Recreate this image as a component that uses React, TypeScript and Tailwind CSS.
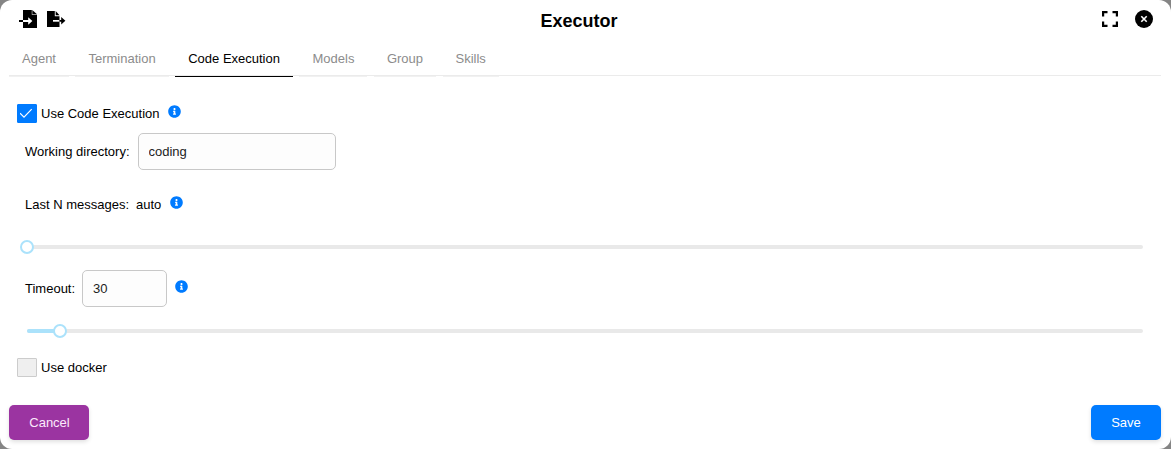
import { useState } from "react";
import { FaInfoCircle } from "react-icons/fa";

const TABS = ["Agent", "Termination", "Code Execution", "Models", "Group", "Skills"];

function ImportIcon() {
  return (
    <svg width="20" height="20" viewBox="0 0 20 20">
      <path d="M5 1h8.800v4.800H19v13.200H5z" fill="black" />
      <path d="M14.300 1 19 5.300H14.300z" fill="black" />
      <path d="M1 11h4v2H1z" fill="black" />
      <path d="M5 11h5.200V8.200l4.200 3.800-4.200 3.800V13H5z" fill="white" />
    </svg>
  );
}

function ExportIcon() {
  return (
    <svg width="20" height="20" viewBox="0 0 20 20">
      <path d="M0 2h7.800v5.200H12.500V18H0z" fill="black" />
      <path d="M8.700 2 12.500 6.300H8.700z" fill="black" />
      <path d="M6 11h6.500v1.700H6z" fill="white" />
      <path d="M12.500 11h1.700V8l4.200 3.800-4.200 3.800v-2.900h-1.700z" fill="black" />
    </svg>
  );
}

function FullscreenIcon() {
  return (
    <svg width="16" height="16" viewBox="0 0 16 16" fill="none" stroke="black" strokeWidth="2.200">
      <path d="M1.100 5.500V1.100H5.500M10.500 1.100h4.400V5.500M14.900 10.500v4.400H10.500M5.500 14.900H1.100V10.500" />
    </svg>
  );
}

function CloseIcon() {
  return (
    <svg width="18" height="18" viewBox="0 0 18 18">
      <circle cx="9" cy="9" r="9" fill="black" />
      <path d="m6.300 6.300 5.400 5.400M11.700 6.300l-5.400 5.400" stroke="white" strokeWidth="1.600" />
    </svg>
  );
}

function Info() {
  return <FaInfoCircle className="size-[13px] shrink-0 text-[#007bff]" />;
}

function Slider({ percent }: { percent: number }) {
  return (
    <div className="relative mx-[18px] h-1 rounded-full bg-[#e9e9e9]">
      <div className="h-1 rounded-full bg-[#abe2fb]" style={{ width: `${percent}%` }} />
      <div
        className="absolute -top-[5px] size-3.5 -translate-x-1/2 rounded-full border-2 border-[#abe2fb] bg-white"
        style={{ left: `${percent}%` }}
      />
    </div>
  );
}

function Checkbox({ checked, onChange }: { checked: boolean; onChange: () => void }) {
  return (
    <button
      role="checkbox"
      aria-checked={checked}
      onClick={onChange}
      className={`flex h-[19px] w-5 items-center justify-center rounded-[1px] border ${
        checked ? "border-[#007bff] bg-[#007bff]" : "border-[#cccccc] bg-[#efefef]"
      }`}
    >
      {checked && (
        <svg width="14" height="12" viewBox="0 0 14 12" className="shrink-0" fill="none" stroke="white" strokeWidth="1.200">
          <path d="m0 5.200 4 4 7.700-8" />
        </svg>
      )}
    </button>
  );
}

export default function App() {
  const [active, setActive] = useState("Code Execution");
  const [useCode, setUseCode] = useState(true);
  const [docker, setDocker] = useState(false);

  return (
    <div className="h-[449px] bg-[#858585] font-['Liberation_Sans',Arial,sans-serif] text-[13px] leading-5 text-black">
      <div className="flex h-full flex-col rounded-[12px] bg-white pl-[9px] pr-[10px]">
        <header className="flex h-[42px] shrink-0 items-start justify-between">
          <div className="flex w-[68px] gap-[9px] pl-[9px] pt-[9px]">
            <ImportIcon />
            <ExportIcon />
          </div>
          <h1 className="pt-[9px] text-[18px] font-bold leading-6">Executor</h1>
          <div className="flex w-20 items-center justify-end gap-[17px] pr-2 pt-[10px]">
            <FullscreenIcon />
            <CloseIcon />
          </div>
        </header>

        <nav className="flex h-[34px] shrink-0 gap-[6.500px] border-b border-[#ebebeb]">
          {TABS.map((tab) => (
            <button
              key={tab}
              onClick={() => setActive(tab)}
              className={`h-[35px] border-b px-[13px] pb-px ${
                active === tab ? "border-black text-black" : "border-[#f1f1f1] text-[#8c8c8c]"
              }`}
            >
              {tab}
            </button>
          ))}
        </nav>

        <main className="flex flex-col">
          <div className="mt-7 flex h-[19px] items-center pl-2">
            <Checkbox checked={useCode} onChange={() => setUseCode(!useCode)} />
            <span className="ml-1 mr-2">Use Code Execution</span>
            <div className="-mt-1"><Info /></div>
          </div>

          <div className="mt-[10px] flex h-[37px] items-center pl-4">
            <label>Working directory:</label>
            <input
              defaultValue="coding"
              className="ml-2 h-[37px] w-[198px] rounded-[5px] border border-[#c8c8c8] bg-[#fdfdfd] px-[10px] text-[#222222]"
            />
          </div>

          <div className="mt-[25px] flex h-5 items-center pl-4">
            <span>Last N messages:</span>
            <span className="ml-[7px] mr-[9px]">auto</span>
            <div className="-mt-[6px]"><Info /></div>
          </div>
          <div className="mt-[30px]"><Slider percent={0} /></div>

          <div className="mt-[21px] flex h-[37px] items-center pl-4">
            <label>Timeout:</label>
            <input
              defaultValue="30"
              className="ml-[7px] mr-2 h-[37px] w-[85px] rounded-[5px] border border-[#c8c8c8] bg-[#fdfdfd] px-[10px] text-[#222222]"
            />
            <div className="-mt-1"><Info /></div>
          </div>
          <div className="mt-[22px]"><Slider percent={3} /></div>

          <div className="mt-[25px] flex h-[19px] items-center pl-2">
            <Checkbox checked={docker} onChange={() => setDocker(!docker)} />
            <span className="ml-1">Use docker</span>
          </div>
        </main>

        <footer className="mt-7 flex justify-between">
          <button className="h-[35px] w-20 rounded-[5px] bg-[#9b34a1] pl-px text-[#fbeafc] shadow-[0_2px_4px_rgba(0,0,0,0.12)]">
            Cancel
          </button>
          <button className="h-[35px] w-[70px] rounded-[5px] bg-[#007bff] text-white shadow-[0_2px_4px_rgba(0,0,0,0.12)]">
            Save
          </button>
        </footer>
      </div>
    </div>
  );
}
